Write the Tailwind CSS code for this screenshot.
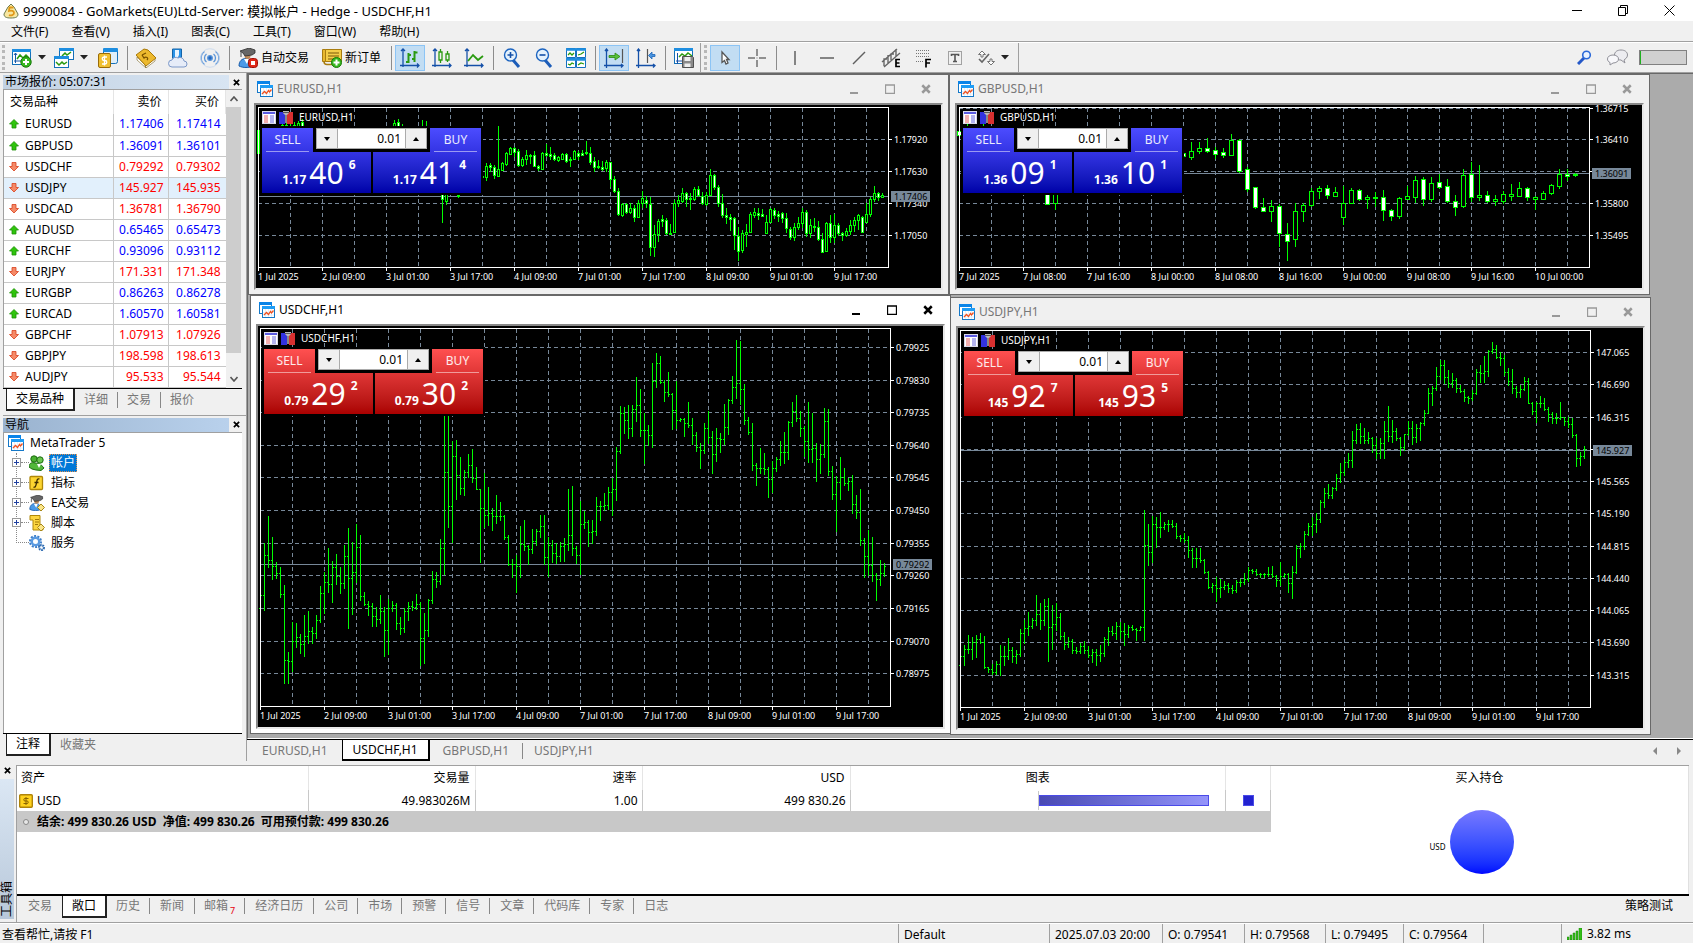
<!DOCTYPE html>
<html lang="zh-CN">
<head>
    <meta charset="UTF-8">
    <meta name="viewport" content="width=device-width, initial-scale=1.0">
    <title>9990084 - GoMarkets(EU)Ltd-Server: 模拟帐户 - Hedge - USDCHF,H1</title>
    <script src="https://cdn.jsdelivr.net/npm/@tailwindcss/browser@4"></script>
</head>
<body class="flex h-screen flex-col overflow-hidden bg-[#f0f0f0] font-['Noto_Sans','Noto_Sans_CJK_SC',sans-serif] text-[12px] leading-4 text-black">

<!-- shared icons -->
<svg class="hidden">
    <symbol id="i-chart" viewBox="0 0 16 16">
        <rect x="0.5" y="0.5" width="12" height="11" fill="#fff" stroke="#1478c8"/>
        <rect x="0" y="0" width="13" height="3" fill="#0a84e8"/>
        <rect x="3.5" y="4.5" width="12" height="11" fill="#fff" stroke="#1478c8"/>
        <rect x="3" y="4" width="13" height="3" fill="#1e9cf5"/>
        <path d="M6.500 7v8M9.500 7v8M12.500 7v8M4 10.500h11M4 13h11" stroke="#d5e6f5" stroke-width=".6"/>
        <path d="M5 13l2.500-2.500 2 2 2-3 1 1.500 2-2.500" fill="none" stroke="#f0501e" stroke-width="1.300"/>
    </symbol>
    <symbol id="i-up" viewBox="0 0 10 10">
        <path d="M5 .5L9.500 5H7v4H3V5H.5z" fill="#2fc40c" stroke="#1d9106" stroke-width=".8"/>
    </symbol>
    <symbol id="i-down" viewBox="0 0 10 10">
        <path d="M5 9L9.500 4.500H7v-4H3v4H.5z" fill="#f58a68" stroke="#d8401c" stroke-width=".8"/>
    </symbol>
    <symbol id="i-caret" viewBox="0 0 8 5"><path d="M0 0h8L4 4.500z" fill="#222"/></symbol>
    <symbol id="i-close" viewBox="0 0 8 8"><path d="M1 1l6 6M7 1L1 7" stroke="currentColor" stroke-width="2"/></symbol>
    <symbol id="i-grid" viewBox="0 0 14 13">
        <rect x=".5" y=".5" width="13" height="12" fill="#fff" stroke="#d8d8e8"/>
        <rect x="1" y="1" width="12" height="2" fill="#5a5ae0"/>
        <path d="M2 5h4M2 7h4M2 9h4M2 11h4" stroke="#e86060"/>
        <path d="M8 5h4M8 7h4M8 9h4M8 11h4" stroke="#6868e0"/>
    </symbol>
    <symbol id="i-trade" viewBox="0 0 14 13">
        <path d="M0 1h6v12H0z" fill="#3232e0"/><path d="M8 1h6v12H8z" fill="#d83030"/>
        <path d="M4 0h6v2l-2 2H6L4 2z" fill="#b8b8b8"/><path d="M6 4h2v8H6z" fill="#888"/><path d="M4 1.500h6" stroke="#555"/>
    </symbol>
    <symbol id="i-hat" viewBox="0 0 20 20">
        <path d="M1 18c0-5 3-7.500 7-7.500s7 2.500 7 7.500c-4 2-10 2-14 0z" fill="#4a9ae8" stroke="#1a5ca8"/>
        <path d="M6 11l3 5 2-5z" fill="#fff"/>
        <circle cx="9.500" cy="8" r="3" fill="#c08a58"/>
        <path d="M2 3l9-3 6 2v3l-3 2-7 1-2-3z" fill="#666" stroke="#2c2c2c" stroke-width=".8"/>
        <path d="M3 4v5" stroke="#444"/>
    </symbol>
</svg>

<!-- title bar -->
<header class="flex h-[21px] shrink-0 items-center bg-white pl-[3px]">
    <svg class="size-4" viewBox="0 0 16 16"><path d="M8 1l3 3 4 7c0 3-2 4-7 4s-7-1-7-4l4-7z" fill="#f8e7a0" stroke="#6b7a50"/><path d="M10.500 4.500h-4l-.5 3.500c3-1 5 0 5 2s-3 3-5 2" fill="none" stroke="#e09818" stroke-width="1.800"/></svg>
    <h1 class="ml-1 flex-1 text-[13px]">9990084 - GoMarkets(EU)Ltd-Server: 模拟帐户 - Hedge - USDCHF,H1</h1>
    <div class="flex gap-[35px] pr-[18px]">
        <button aria-label="最小化"><svg class="size-[11px]" viewBox="0 0 11 11"><path d="M0 5.500h10" stroke="#000"/></svg></button>
        <button aria-label="还原"><svg class="size-[11px]" viewBox="0 0 11 11" fill="none" stroke="#000"><path d="M.5 2.500h7v8h-7zM2.500 2V.5h7v8H8"/></svg></button>
        <button aria-label="关闭"><svg class="size-[11px]" viewBox="0 0 11 11"><path d="M.5.5l10 10M10.500.5l-10 10" stroke="#000"/></svg></button>
    </div>
</header>

<!-- menu -->
<nav class="flex h-[22px] shrink-0 items-center gap-[23px] border-b border-white pl-[11px] shadow-[inset_0_-1px_0_#a0a0a0]">
    <a href="#">文件(F)</a>
    <a href="#">查看(V)</a>
    <a href="#">插入(I)</a>
    <a href="#">图表(C)</a>
    <a href="#">工具(T)</a>
    <a href="#">窗口(W)</a>
    <a href="#">帮助(H)</a>
</nav>

<!-- toolbar -->
<div class="flex h-[30px] shrink-0 items-center border-b border-[#a0a0a0]">
    <div class="ml-[2px] mr-[3px] h-[25px] border-l-3 border-dotted border-[#b8b8b8]"></div>
    <button aria-label="新图表" class="flex w-[42px] items-center gap-1.5 pl-1">
        <svg class="size-5" viewBox="0 0 20 20"><rect x=".5" y="1.500" width="18" height="15" fill="#fff" stroke="#1470b8"/><rect x="0" y="1" width="19" height="3" fill="#1e8ee0"/><path d="M3.500 5v10M2 7l1.500-2L5 7M2 13h14" stroke="#1858a8" fill="none"/><path d="M5 11l3-4 3 3 3-3 3 3" fill="none" stroke="#2a9a10" stroke-width="1.500"/><circle cx="14" cy="14" r="5.200" fill="#38b820" stroke="#167a08"/><path d="M14 11v6M11 14h6" stroke="#fff" stroke-width="2"/></svg>
        <svg class="h-[5px] w-2"><use href="#i-caret"/></svg>
    </button>
    <button aria-label="图表配置" class="flex w-[42px] items-center gap-1.5 pl-1">
        <svg class="size-5" viewBox="0 0 20 20"><rect x="5.500" y=".5" width="14" height="11" fill="#fff" stroke="#1470b8"/><rect x="5" y="0" width="15" height="3" fill="#1e8ee0"/><path d="M8 8l3-3 2 2 4-3" fill="none" stroke="#2a9a10" stroke-width="1.500"/><rect x=".5" y="8.500" width="14" height="11" fill="#fff" stroke="#1470b8"/><rect x="0" y="8" width="15" height="3" fill="#1e8ee0"/><path d="M2 14l3 3 3-3 2 2 3-2" fill="none" stroke="#2a9a10" stroke-width="1.500"/></svg>
        <svg class="h-[5px] w-2"><use href="#i-caret"/></svg>
    </button>
    <button aria-label="市场报价" class="flex w-8 justify-center">
        <svg class="size-5" viewBox="0 0 20 20"><rect x="5.500" y=".5" width="14" height="15" rx="2" fill="#e0effa" stroke="#1470b8"/><rect x="5" y="0" width="15" height="4" rx="1" fill="#1e8ee0"/><rect x=".5" y="5.500" width="12" height="14" rx="1.500" fill="#f0c030" stroke="#9a6c08"/><path d="M9 9H6a1.500 1.500 0 000 3.500h1A1.500 1.500 0 017 16H4M6.500 7.500v10" fill="none" stroke="#fff" stroke-width="1.300"/></svg>
    </button>
    <span class="ml-[3px] mr-[2px] h-6 w-px bg-[#8c8c8c]"></span>
    <button aria-label="账户" class="flex w-8 justify-center">
        <svg class="size-5" viewBox="0 0 20 20"><path d="M1 9l8 8 1 3-9-8zM9 17l10-7v3l-9 7z" fill="#fff" stroke="#8c7a40" stroke-width=".7"/><path d="M0 7L8 1l4 1 8 8-10 8z" fill="#edb92e" stroke="#a87808"/><path d="M6 7l4-2M6 7l2 3c2-2 5 0 3 2" stroke="#7a5200" stroke-width="1.300" fill="none"/></svg>
    </button>
    <button aria-label="云" class="flex w-8 justify-center">
        <svg class="size-5" viewBox="0 0 20 20"><path d="M4.500 10.500V1h9v10" fill="#2b94e8" stroke="#1464a8"/><path d="M7 2h4v5l-2 4-2-1z" fill="#e8f4ff"/><path d="M4 19a3.500 3.500 0 010-7 4 4 0 016-2 4 4 0 016 3 3 3 0 010 6z" fill="#e6ecf8" stroke="#7c98c8"/></svg>
    </button>
    <button aria-label="信号" class="flex w-8 justify-center">
        <svg class="size-5" viewBox="0 0 20 20" fill="none" stroke="#5a94d8" stroke-width="1.300"><circle cx="10" cy="10" r="2.300" fill="#2468c0"/><path d="M6.500 14a5 5 0 010-8M13.500 14a5 5 0 000-8M4.500 16.500a8 8 0 010-13M15.500 16.500a8 8 0 000-13"/><circle cx="10" cy="10" r="9.300" stroke="#c4d6ec" stroke-width=".8"/></svg>
    </button>
    <span class="ml-[3px] mr-[2px] h-6 w-px bg-[#8c8c8c]"></span>
    <button class="flex w-[84px] items-center gap-[3px] pl-1.5">
        <svg class="size-5 shrink-0" viewBox="0 0 20 20"><use href="#i-hat"/><rect x="10.500" y="10.500" width="9" height="9" rx="3" fill="#e02818" stroke="#a01008"/><rect x="13" y="13" width="4" height="4" fill="#fff"/></svg>自动交易
    </button>
    <button class="flex w-[72px] items-center gap-[3px] pl-1.5">
        <svg class="size-5 shrink-0" viewBox="0 0 20 20"><path d="M3.500 1.500h16v12h-16z" fill="#f4cd48" stroke="#a87c10"/><path d="M.5 1.500h3v12h-3z" fill="#e8b830" stroke="#a87c10"/><path d="M2 13.500c0 3 2 3 3 3h6" fill="none" stroke="#a87c10" stroke-width="1.500"/><path d="M6 5h11M6 8h11M6 11h8" stroke="#7a5a08" stroke-width="1.200"/><circle cx="14.500" cy="14.500" r="5" fill="#38b820" stroke="#167a08"/><path d="M14.500 11.500v6M11.500 14.500h6" stroke="#fff" stroke-width="2"/></svg>新订单
    </button>
    <span class="ml-[3px] mr-[2px] h-6 w-px bg-[#8c8c8c]"></span>
    <button aria-label="柱形图" class="mx-px flex h-[26px] w-[30px] items-center justify-center border border-[#8cc4f5] bg-[#c2ddf3]">
        <svg class="size-5" viewBox="0 0 20 20" fill="none"><path d="M3 1v18M0 17.500h19M1 3l2-2 2 2M17 15.500l2 2-2 2" stroke="#1450a8" stroke-width="1.300"/><path d="M8.500 5v10M6 14h2.500M8.500 7H11M14.500 3v11M12 11h2.500M14.500 4.500h3" stroke="#2a9a10" stroke-width="2"/></svg>
    </button>
    <button aria-label="蜡烛图" class="mx-px flex h-[26px] w-[30px] items-center justify-center">
        <svg class="size-5" viewBox="0 0 20 20" fill="none"><path d="M3 1v18M0 17.500h19M1 3l2-2 2 2M17 15.500l2 2-2 2" stroke="#1450a8" stroke-width="1.300"/><path d="M8.500 1v3M8.500 12v3M7 4h3v8H7zM15.500 3v3M15.500 12v2M14 6h3v6h-3z" stroke="#2a9a10" stroke-width="1.300"/></svg>
    </button>
    <button aria-label="折线图" class="mx-px flex h-[26px] w-[30px] items-center justify-center">
        <svg class="size-5" viewBox="0 0 20 20" fill="none"><path d="M3 1v18M0 17.500h19M1 3l2-2 2 2M17 15.500l2 2-2 2" stroke="#1450a8" stroke-width="1.300"/><path d="M4 13l5-6 5 5 5-4" stroke="#2a9a10" stroke-width="1.800"/></svg>
    </button>
    <span class="ml-[3px] mr-[2px] h-6 w-px bg-[#8c8c8c]"></span>
    <button aria-label="放大" class="mx-px flex h-[26px] w-[30px] items-center justify-center">
        <svg class="size-5" viewBox="0 0 20 20" fill="none"><path d="M11 12l6 7" stroke="#1c5cb8" stroke-width="3"/><circle cx="8.500" cy="7" r="6" fill="#e4f1fc" stroke="#1c64c0" stroke-width="1.400"/><path d="M5.500 7h6M8.500 4v6" stroke="#1450a8" stroke-width="1.600"/></svg>
    </button>
    <button aria-label="缩小" class="mx-px flex h-[26px] w-[30px] items-center justify-center">
        <svg class="size-5" viewBox="0 0 20 20" fill="none"><path d="M11 12l6 7" stroke="#1c5cb8" stroke-width="3"/><circle cx="8.500" cy="7" r="6" fill="#e4f1fc" stroke="#1c64c0" stroke-width="1.400"/><path d="M5.500 7h6" stroke="#1450a8" stroke-width="1.600"/></svg>
    </button>
    <button aria-label="平铺窗口" class="mx-px flex h-[26px] w-[30px] items-center justify-center">
        <svg class="size-5" viewBox="0 0 20 20" fill="none"><path d="M.5.5h9v9h-9zM10.500.5h9v9h-9zM.5 10.500h9v9h-9zM10.500 10.500h9v9h-9z" fill="#fff" stroke="#1470c0"/><path d="M0 1.500h20M0 11.500h20" stroke="#1e8ee0" stroke-width="2.500"/><path d="M2 7l2-2 2 2 2-2M12 7l3-1 3-2M2 16l2 1 2-2 2 1M12 17l3-2 3 1" stroke="#2a9a10" stroke-width="1.300"/></svg>
    </button>
    <span class="ml-[3px] mr-[2px] h-6 w-px bg-[#8c8c8c]"></span>
    <button aria-label="自动滚动" class="mx-px flex h-[26px] w-[30px] items-center justify-center border border-[#8cc4f5] bg-[#c2ddf3]">
        <svg class="size-5" viewBox="0 0 20 20" fill="none"><path d="M2.500 1v19M0 17.500h18M1 3l1.500-2L4 3M17 16l2 1.500-2 2" stroke="#1450a8" stroke-width="1.300"/><path d="M18.500 1v14" stroke="#555" stroke-width="1.200"/><path d="M5 7.500h6V5l5 3.500-5 3.500V9.500H5z" fill="#58c03a" stroke="#2a8a10" stroke-width=".8"/></svg>
    </button>
    <button aria-label="图表平移" class="mx-px flex h-[26px] w-[30px] items-center justify-center">
        <svg class="size-5" viewBox="0 0 20 20" fill="none"><path d="M2.500 1v19M0 17.500h18M1 3l1.500-2L4 3M17 16l2 1.500-2 2" stroke="#1450a8" stroke-width="1.300"/><path d="M11.500 1v14" stroke="#555" stroke-width="1.200"/><path d="M19 6.500h-3V4l-3.500 3.500L16 11V8.500h3z" fill="#4a94e0" stroke="#1c64b8" stroke-width=".8"/></svg>
    </button>
    <span class="ml-[3px] mr-[2px] h-6 w-px bg-[#8c8c8c]"></span>
    <button aria-label="保存模板" class="mx-px flex h-[26px] w-[30px] items-center justify-center">
        <svg class="size-5" viewBox="0 0 20 20" fill="none"><rect x=".5" y=".5" width="18" height="15" fill="#fff" stroke="#1470b8"/><path d="M0 1.500h19" stroke="#1e8ee0" stroke-width="3"/><path d="M3.500 5v11M2 13h6" stroke="#1450a8"/><path d="M5 9l3-3 3 2 3-3 4 3" stroke="#2a9a10" stroke-width="1.500"/><path d="M8.500 8.500h10l1 1v10h-11z" fill="#8a8a8a" stroke="#505050"/><path d="M10.500 9v4h6V9zM10.500 19v-3.500h6V19" fill="#eee"/></svg>
    </button>
    <span class="h-full w-px bg-[#a0a0a0]"></span>
    <div class="ml-[3px] mr-[2px] h-[25px] border-l-3 border-dotted border-[#b8b8b8]"></div>
    <button aria-label="光标" class="mx-px flex h-[26px] w-[30px] items-center justify-center border border-[#8cc4f5] bg-[#c2ddf3]">
        <svg class="size-4" viewBox="0 0 16 16"><path d="M5 2v10.500l2.500-2L9 14l2-1-1.500-3.500H12z" fill="#fff" stroke="#555" stroke-width="1.300"/></svg>
    </button>
    <button aria-label="十字准线" class="mx-px flex h-[26px] w-[30px] items-center justify-center">
        <svg class="size-5" viewBox="0 0 20 20"><path d="M10 1v7M10 12v7M1 10h7M12 10h7" stroke="#707070" stroke-width="1.500"/><path d="M9.500 10h1" stroke="#707070"/></svg>
    </button>
    <span class="ml-[3px] mr-[2px] h-6 w-px bg-[#8c8c8c]"></span>
    <button aria-label="垂直线" class="mx-px flex h-[26px] w-[30px] items-center justify-center"><svg class="size-5" viewBox="0 0 20 20"><path d="M10 3v14" stroke="#606060" stroke-width="1.500"/></svg></button>
    <button aria-label="水平线" class="mx-px flex h-[26px] w-[30px] items-center justify-center"><svg class="size-5" viewBox="0 0 20 20"><path d="M3 10h14" stroke="#606060" stroke-width="1.500"/></svg></button>
    <button aria-label="趋势线" class="mx-px flex h-[26px] w-[30px] items-center justify-center"><svg class="size-5" viewBox="0 0 20 20"><path d="M4 16L16 4" stroke="#606060" stroke-width="1.500"/></svg></button>
    <button aria-label="等距通道" class="mx-px flex h-[26px] w-[30px] items-center justify-center">
        <svg class="size-5" viewBox="0 0 20 20"><path d="M1 14L16 1M3 19L19 5M3 18v-7h3M7 15V7M10 12V6h3M15 9V1" stroke="#666" fill="none" stroke-width="1.400"/><path d="M19 11.500h-4v7h4M15 15h3.500" stroke="#000" fill="none" stroke-width="1.700"/></svg>
    </button>
    <button aria-label="斐波那契" class="mx-px flex h-[26px] w-[30px] items-center justify-center">
        <svg class="size-5" viewBox="0 0 20 20"><path d="M3 2.500h14M3 5.500h14M3 8.500h14M3 13.500h8" stroke="#777" stroke-dasharray="1 1"/><path d="M18 11.500h-5v8M13 15h4" stroke="#000" fill="none" stroke-width="1.700"/></svg>
    </button>
    <button aria-label="文本" class="mx-px flex h-[26px] w-[30px] items-center justify-center">
        <svg class="size-5" viewBox="0 0 20 20"><rect x="3.500" y="3.500" width="13" height="13" fill="none" stroke="#555" stroke-dasharray="1 1"/><path d="M6.500 8V6.500h7V8M10 6.500v7M8 13.500h4" stroke="#555" stroke-width="1.600" fill="none"/></svg>
    </button>
    <button aria-label="图形" class="ml-px flex h-[26px] w-[42px] items-center gap-[5px] pl-1">
        <svg class="size-5" viewBox="0 0 20 20"><path d="M6 3L2.500 6.500H5V9h2V6.500h2.500zM15 17l3.500-3.500H16V11h-2v2.500h-2.500z" fill="#fff" stroke="#666" stroke-width=".9"/><path d="M3 11l3 3 7-8" fill="none" stroke="#666" stroke-width="1.600"/></svg>
        <svg class="h-[5px] w-2 shrink-0"><use href="#i-caret"/></svg>
    </button>
    <span class="ml-1 h-full w-px bg-[#a0a0a0]"></span>
    <div class="ml-auto flex items-center pr-[6px]">
        <button aria-label="搜索"><svg class="size-[15px]" viewBox="0 0 15 15"><path d="M7 8l-6 6" stroke="#2458c8" stroke-width="3"/><circle cx="9.500" cy="5" r="3.800" fill="#e8f2ff" stroke="#2a68d8" stroke-width="1.600"/></svg></button>
        <button aria-label="聊天" class="ml-[15px]"><svg class="h-[17px] w-[21px]" viewBox="0 0 21 17"><path d="M14 1c4 0 6.500 2 6.500 5S18 10 17 11l1 3-4-3c-4 0-6.500-2-6.500-5S10 1 14 1z" fill="#ececf0" stroke="#909098"/><path d="M6 6c3 0 5.500 1.500 5.500 4S9 14 6 14l-3 2v-2.500C1.500 13 .5 11.500.5 10 .5 7.500 3 6 6 6z" fill="#f8f8fb" stroke="#909098"/></svg></button>
        <div class="ml-[11px] h-[15px] w-12 border border-[#808080] bg-[#d0d0d0]"><div class="h-full w-px bg-[#20b020]"></div></div>
    </div>
</div>

<main class="flex min-h-0 flex-1">
    <!-- left docks -->
    <aside class="flex w-[247px] shrink-0 flex-col border-r border-[#a0a0a0] pl-[3px] pt-[2px]">
        <section class="flex flex-col pr-1">
            <div class="flex h-[14px] items-center justify-between">
                <h2 class="flex h-full w-[226px] items-center bg-linear-to-r from-[#c2d2e3] to-[#d8e5f3] pl-[2px]">市场报价: 05:07:31</h2>
                <button aria-label="关闭市场报价" class="mr-0.5"><svg class="size-[7px]"><use href="#i-close"/></svg></button>
            </div>
            <div class="flex border-l border-t border-[#a0a0a0] bg-white">
                <table class="w-[222px] table-fixed border-collapse">
                    <thead>
                        <tr class="h-6">
                            <th class="w-[109px] border-r border-[#e5e5e5] pl-1.5 text-left font-normal">交易品种</th>
                            <th class="w-[55px] border-r border-[#e5e5e5] pr-1.5 text-right font-normal">卖价</th>
                            <th class="border-r border-[#e5e5e5] pr-1.5 text-right font-normal">买价</th>
                        </tr>
                    </thead>
                    <tbody id="quotes"></tbody>
                </table>
                <div class="flex w-4 flex-col items-center bg-[#f0f0f0]">
                    <button aria-label="向上" class="flex h-[17px] items-center"><svg class="h-[6px] w-2" viewBox="0 0 8 6"><path d="M.5 5L4 1l3.500 4" fill="none" stroke="#555" stroke-width="1.600"/></svg></button>
                    <div class="w-full flex-1 pb-[18px]"><div class="h-full w-[15px] bg-[#cdcdcd]"></div></div>
                    <button aria-label="向下" class="flex h-[17px] items-center"><svg class="h-[6px] w-2" viewBox="0 0 8 6"><path d="M.5 1L4 5l3.500-4" fill="none" stroke="#555" stroke-width="1.600"/></svg></button>
                </div>
            </div>
            <div class="flex h-[23px] items-start border-t border-black pl-[3px] text-[#777]">
                <button class="h-[22px] border-x border-b border-r-2 border-b-2 border-[#222] bg-white px-[9px] text-black">交易品种</button>
                <button class="mt-[3px] border-r border-[#888] px-[9px]">详细</button>
                <button class="mt-[3px] border-r border-[#888] px-[9px]">交易</button>
                <button class="mt-[3px] px-[9px]">报价</button>
            </div>
        </section>
        <section class="mt-1 flex min-h-0 flex-1 flex-col border-t border-[#a0a0a0] pb-[5px] pr-1 pt-[2px]">
            <div class="flex h-[14px] items-center justify-between">
                <h2 class="flex h-full w-[226px] items-center bg-linear-to-r from-[#9ab3cf] to-[#b9d1ec] pl-[2px]">导航</h2>
                <button aria-label="关闭导航" class="mr-0.5"><svg class="size-[7px]"><use href="#i-close"/></svg></button>
            </div>
            <div class="flex-1 border-l border-t border-[#a0a0a0] bg-white pl-1">
                <div class="flex h-5 items-center gap-1.5"><svg class="size-4"><use href="#i-chart"/></svg>MetaTrader 5</div>
                <ul class="relative">
                    <li class="absolute bottom-[10px] left-2 top-0 border-l border-dotted border-[#888]"></li>
                    <li class="relative flex h-5 items-center pl-1">
                        <button aria-label="展开" class="flex size-[9px] items-center justify-center border border-[#999] bg-white"><svg class="size-[5px]" viewBox="0 0 5 5"><path d="M0 2.500h5M2.500 0v5" stroke="#2040a0"/></svg></button><span class="w-2 border-t border-dotted border-[#888]"></span>
                        <svg class="size-4" viewBox="0 0 16 16"><circle cx="5" cy="4" r="3.200" fill="#48b030" stroke="#1c6c10"/><circle cx="11" cy="5" r="3.200" fill="#6cc850" stroke="#1c6c10"/><path d="M0 12c0-4 3-5 6-4 3 0 6 1 9 5l-3 2.500-5-.5-4-1z" fill="#52b83a" stroke="#1c6c10"/><path d="M8 9l2 4 2-4" fill="#fff"/></svg>
                        <span class="ml-1 border border-dotted border-[#e09050] bg-[#0078d7] px-px text-white">帐户</span>
                    </li>
                    <li class="relative flex h-5 items-center pl-1">
                        <button aria-label="展开" class="flex size-[9px] items-center justify-center border border-[#999] bg-white"><svg class="size-[5px]" viewBox="0 0 5 5"><path d="M0 2.500h5M2.500 0v5" stroke="#2040a0"/></svg></button><span class="w-2 border-t border-dotted border-[#888]"></span>
                        <svg class="size-4" viewBox="0 0 16 16"><rect x="1" y="1.500" width="12.500" height="13" rx="1" fill="#fcd530" stroke="#b08808" stroke-width="1.300"/><path d="M10.500 4C8 3 8 6 7.500 8s-1 5-3 4M5.500 7.500h4" fill="none" stroke="#3c2c00" stroke-width="1.300"/></svg>
                        <span class="ml-1.5">指标</span>
                    </li>
                    <li class="relative flex h-5 items-center pl-1">
                        <button aria-label="展开" class="flex size-[9px] items-center justify-center border border-[#999] bg-white"><svg class="size-[5px]" viewBox="0 0 5 5"><path d="M0 2.500h5M2.500 0v5" stroke="#2040a0"/></svg></button><span class="w-2 border-t border-dotted border-[#888]"></span>
                        <svg class="size-4" viewBox="0 0 16 16"><use href="#i-hat"/><path d="M12 9l3.500 3.500L12 16l-3.500-3.500z" fill="#fbe68a" stroke="#a88818"/></svg>
                        <span class="ml-1.5">EA交易</span>
                    </li>
                    <li class="relative flex h-5 items-center pl-1">
                        <button aria-label="展开" class="flex size-[9px] items-center justify-center border border-[#999] bg-white"><svg class="size-[5px]" viewBox="0 0 5 5"><path d="M0 2.500h5M2.500 0v5" stroke="#2040a0"/></svg></button><span class="w-2 border-t border-dotted border-[#888]"></span>
                        <svg class="size-4" viewBox="0 0 16 16"><path d="M1 .5h10v12h3v2.500H4v-10H1z" fill="#fcd540" stroke="#b08808"/><path d="M6 4.500h4M6 7h4M6 9.500h3" stroke="#a07808"/><path d="M12 9l3.500 3.500L12 16l-3.500-3.500z" fill="#fbe68a" stroke="#a88818"/></svg>
                        <span class="ml-1.5">脚本</span>
                    </li>
                    <li class="relative flex h-5 items-center pl-2">
                        <span class="w-[13px] border-t border-dotted border-[#888]"></span>
                        <svg class="size-4" viewBox="0 0 16 16" fill="none"><circle cx="6.500" cy="6.500" r="5.500" stroke="#3a7cc8" stroke-width="2" stroke-dasharray="2 1.400"/><circle cx="6.500" cy="6.500" r="3.700" stroke="#5a9ae0" stroke-width="2.400"/><circle cx="12.500" cy="12.500" r="2.400" stroke="#2a68b0" stroke-width="2.200" stroke-dasharray="1.500 .7"/></svg>
                        <span class="ml-1.5">服务</span>
                    </li>
                </ul>
            </div>
            <div class="flex h-[23px] items-start border-t border-black pl-[3px] text-[#777]">
                <button class="h-[22px] border-x border-b border-r-2 border-b-2 border-[#222] bg-white px-[9px] text-black">注释</button>
                <button class="mt-[3px] px-[9px]">收藏夹</button>
            </div>
        </section>
    </aside>

    <!-- chart workspace -->
    <div class="flex min-w-0 flex-1 flex-col">
        <div id="desk" class="relative min-h-0 flex-1 overflow-hidden border-b border-l border-t border-[#696969] border-b-white bg-[#ababab]"></div>
        <div class="flex h-[22px] shrink-0 items-start border-t border-black pl-[5px] text-[#777]">
            <button class="mt-[3px] px-[10px]">EURUSD,H1</button>
            <button class="ml-1 h-[21px] border-x border-b border-r-2 border-b-2 border-black bg-white px-[10px] text-black">USDCHF,H1</button>
            <button class="mt-[3px] border-r border-[#888] px-[13px]">GBPUSD,H1</button>
            <button class="mt-[3px] px-[11px]">USDJPY,H1</button>
            <div class="ml-auto flex gap-[18px] self-center pr-3">
                <button aria-label="向左滚动"><svg class="h-2 w-[5px]" viewBox="0 0 5 8"><path d="M4 0v8L0 4z" fill="#888"/></svg></button>
                <button aria-label="向右滚动"><svg class="h-2 w-[5px]" viewBox="0 0 5 8"><path d="M1 0v8l4-4z" fill="#888"/></svg></button>
            </div>
        </div>
    </div>
</main>

<!-- toolbox -->
<section class="flex h-[162px] shrink-0 border-b border-[#a0a0a0] pr-1">
    <div class="flex w-4 shrink-0 flex-col items-center pb-[3px] pr-0.5 pt-1.5">
        <button aria-label="关闭工具箱" class="mb-1 flex h-2"><svg class="size-[7px]"><use href="#i-close"/></svg></button>
        <h2 class="flex w-[14px] flex-1 rotate-180 items-center justify-start bg-linear-to-t from-[#dbe7f4] to-[#b8c8da] pt-[2px] leading-[14px] [text-orientation:sideways] [writing-mode:vertical-rl]">工具箱</h2>
    </div>
    <div class="mt-1 flex min-w-0 flex-1 flex-col border-l border-t border-[#a0a0a0]">
        <div class="flex min-h-0 flex-1 bg-white">
            <div class="w-3/4">
                <table class="w-full table-fixed border-collapse">
                    <thead>
                        <tr class="h-6">
                            <th class="w-[291px] border-r border-[#e5e5e5] pl-1 text-left font-normal">资产</th>
                            <th class="w-[167px] border-r border-[#e5e5e5] pr-[5px] text-right font-normal">交易量</th>
                            <th class="w-[167px] border-r border-[#e5e5e5] pr-[5px] text-right font-normal">速率</th>
                            <th class="w-[208px] border-r border-[#e5e5e5] pr-[5px] text-right font-normal">USD</th>
                            <th class="border-r border-[#e5e5e5] font-normal">图表</th>
                            <th class="w-[45px] border-r border-[#e5e5e5]" aria-label="颜色"></th>
                        </tr>
                    </thead>
                    <tbody>
                        <tr class="h-[21px]">
                            <td class="border-r border-[#c8c8c8] pl-[2px]"><span class="flex items-center gap-1"><svg class="size-[14px]" viewBox="0 0 14 14"><rect x=".7" y=".7" width="12.600" height="12.600" rx="1" fill="#ffd21e" stroke="#b08408" stroke-width="1.400"/><path d="M9.500 4.500H6a1.200 1.200 0 000 2.500h2a1.200 1.200 0 010 2.500H4.500M7 3v8" fill="none" stroke="#8a6400"/></svg>USD</span></td>
                            <td class="border-r border-[#c8c8c8] pr-1 text-right">49.983026M</td>
                            <td class="border-r border-[#c8c8c8] pr-1 text-right">1.00</td>
                            <td class="border-r border-[#c8c8c8] pr-1 text-right">499 830.26</td>
                            <td class="border-r border-[#c8c8c8]"><div class="ml-[50%] border-l border-[#c8c8c8] py-1"><div class="h-[11px] w-[170px] border border-[#4a4ae8] bg-linear-to-r from-[#4a4ab4] to-[#9494fa]"></div></div></td>
                            <td class="border-r border-[#c8c8c8]"><div class="mx-auto size-[11px] border border-[#4a4ae8] bg-[#2222d0]"></div></td>
                        </tr>
                    </tbody>
                </table>
                <p class="flex h-[21px] items-center gap-2 bg-[#c8c8c8] pl-1.5 font-bold"><i class="size-[6px] rounded-full border border-[#888] bg-[#e8e8e8]"></i><span class="whitespace-pre">结余: 499 830.26 USD  净值: 499 830.26  可用预付款: 499 830.26</span></p>
            </div>
            <figure class="flex flex-1 flex-col items-center border-r border-[#e0e0e0]">
                <figcaption class="flex h-6 items-center">买入持仓</figcaption>
                <div class="mr-4 mt-5 flex items-center gap-1 text-[8px]"><span class="mt-[9px]">USD</span><div class="size-16 rounded-full bg-linear-to-b from-[#7878ff] to-[#0000ff]"></div></div>
            </figure>
        </div>
        <div class="flex h-7 shrink-0 items-start border-t-2 border-black pl-[1px] text-[#777]">
            <button class="mt-[2px] px-[10px]">交易</button>
            <button class="h-[22px] border-x border-b border-r-2 border-b-2 border-[#222] bg-white px-[9px] text-black">敞口</button>
            <button class="mt-[2px] border-r border-[#888] px-[9px]">历史</button>
            <button class="mt-[2px] border-r border-[#888] px-[10px]">新闻</button>
            <button class="mt-[2px] flex h-4 border-r border-[#888] px-[9px]">邮箱<span class="mt-[5px] pl-0.5 text-[9px] leading-4 text-red-600">7</span></button>
            <button class="mt-[2px] border-r border-[#888] px-[10px]">经济日历</button>
            <button class="mt-[2px] border-r border-[#888] pl-[10px] pr-[9px]">公司</button>
            <button class="mt-[2px] border-r border-[#888] pl-[10px] pr-[9px]">市场</button>
            <button class="mt-[2px] border-r border-[#888] pl-[10px] pr-[9px]">预警</button>
            <button class="mt-[2px] border-r border-[#888] pl-[10px] pr-[9px]">信号</button>
            <button class="mt-[2px] border-r border-[#888] pl-[10px] pr-[9px]">文章</button>
            <button class="mt-[2px] border-r border-[#888] pl-[10px] pr-[9px]">代码库</button>
            <button class="mt-[2px] border-r border-[#888] pl-[10px] pr-[9px]">专家</button>
            <button class="mt-[2px] px-[10px]">日志</button>
            <button class="ml-auto mr-4 mt-[2px] text-black">策略测试</button>
        </div>
    </div>
</section>

<!-- status bar -->
<footer class="flex h-5 shrink-0 items-stretch border-t border-white leading-[22px]">
    <div class="flex-1 pl-[2px]">查看帮忙,请按 F1</div>
    <div class="w-[151px] border-l border-[#a0a0a0] pl-[5px]">Default</div>
    <div class="w-[113px] border-l border-[#a0a0a0] pl-[5px]">2025.07.03 20:00</div>
    <div class="w-[82px] border-l border-[#a0a0a0] pl-[5px]">O: 0.79541</div>
    <div class="w-[81px] border-l border-[#a0a0a0] pl-[5px]">H: 0.79568</div>
    <div class="w-[78px] border-l border-[#a0a0a0] pl-[5px]">L: 0.79495</div>
    <div class="w-[80px] border-l border-[#a0a0a0] pl-[5px]">C: 0.79564</div>
    <div class="w-[78px] border-l border-[#a0a0a0]"></div>
    <div class="flex w-[132px] items-center gap-[5px] border-l border-[#a0a0a0] pl-[5px]">
        <svg class="h-3 w-[15px]" viewBox="0 0 15 12"><path d="M0 9h2v3H0zM3 7h2v5H3zM6 5h2v7H6zM9 3h2v9H9zM12 0h3v12h-3z" fill="#34c018" stroke="#188008" stroke-width=".5"/></svg>3.82 ms
    </div>
</footer>

<script>
// market watch rows: symbol, bid, ask, direction
const quotes = [
    ['EURUSD','1.17406','1.17414',1],['GBPUSD','1.36091','1.36101',1],['USDCHF','0.79292','0.79302',0],
    ['USDJPY','145.927','145.935',0],['USDCAD','1.36781','1.36790',0],['AUDUSD','0.65465','0.65473',1],
    ['EURCHF','0.93096','0.93112',1],['EURJPY','171.331','171.348',0],['EURGBP','0.86263','0.86278',1],
    ['EURCAD','1.60570','1.60581',1],['GBPCHF','1.07913','1.07926',0],['GBPJPY','198.598','198.613',0],
    ['AUDJPY','95.533','95.544',0]
];
document.getElementById('quotes').innerHTML = quotes.map(([s, bid, ask, up]) => `
    <tr class="h-[21px] ${s === 'USDJPY' ? 'bg-[#e2f0fc]' : 'bg-white'} ${up ? 'text-[#0000ff]' : 'text-[#ff0000]'}">
        <td class="border-b border-r border-[#c8c8c8] pl-[5px] text-black"><span class="flex items-center gap-[6px]"><svg class="size-[10px]"><use href="${up ? '#i-up' : '#i-down'}"/></svg>${s}</span></td>
        <td class="border-b border-r border-[#c8c8c8] pr-1 text-right">${bid}</td>
        <td class="border-b border-[#c8c8c8] pr-[5px] text-right">${ask}</td>
    </tr>`).join('');

// bars are "high low", candles are "index high top bottom low u|d", in thirds of a pixel
const chfBars = `900 955,758 960,678 832,740 866,815 865,832 920,886 1178,1086 1178,996 1142,1000 1070,1032 1090,975 1097,963 1058,1012 1058,975 1045,887 995,846 970,775 905,812 935,792 882,832 908,765 893,714 1014,756 972,702 875,735 930,905 945,932 975,940 1008,950 1008,915 1000,950 1098,927 1092,934 962,940 1018,980 1032,955 1025,935 990,932 960,912 958,935 1126,970 1120,927 1038,843 938,845 890,747 882,378 852,378 712,453 755,450 628,500 612,540 616,492 560,477 575,530 598,597 815,550 710,590 705,655 720,615 700,636 690,675 748,735 825,808 862,795 907,708 860,690 780,765 822,717 790,718 765,675 740,675 822,742 858,750 815,760 820,755 812,745 812,597 780,588 795,768 820,633 852,662 715,690 768,690 760,621 735,633 690,610 660,590 658,563 675,470 630,348 488,350 430,345 445,345 437,262 392,297 438,368 518,405 465,220 470,190 292,197 280,270 333,246 318,308 418,272 413,385 392,385 438,336 410,385 462,425 482,460 535,400 488,363 460,423 550,415 513,430 485,342 462,328 432,258 340,150 323,152 343,282 402,380 433,400 540,520 585,475 548,490 553,530 620,513 605,500 542,453 525,426 520,392 507,335 408,316 392,363 438,407 497,336 517,368 515,460 572,462 550,355 502,357 555,528 628,558 722,502 628,535 585,563 600,555 670,615 683,597 766,743 862,720 855,740 872,850 930,810 885,818 858`;
const jpyBars = `1090 1124,1065 1124,1035 1090,1042 1108,1035 1102,1030 1060,1038 1135,1130 1145,1122 1152,1112 1152,1066 1155,1068 1125,1045 1106,1070 1115,1080 1118,1018 1097,990 1060,966 1035,985 1015,916 1005,940 1018,927 1005,924 1112,945 1078,938 1020,968 1048,1026 1076,1042 1070,1046 1090,1072 1088,1060 1090,1052 1090,1068 1100,1076 1115,1078 1124,1066 1112,1042 1098,1010 1065,1008 1035,996 1048,996 1045,1000 1065,1005 1042,1006 1020,1015 1050,1008 1020,660 1050,702 825,678 815,680 770,667 740,696 716,690 722,690 712,700 745,735 752,728 755,738 800,775 830,775 830,775 815,808 848,843 895,878 905,862 933,868 920,872 898,880 905,885 908,870 905,868 888,848 882,832 872,838 850,838 855,848 860,848 862,832 858,828 862,855 888,815 885,850 860,850 905,828 923,765 850,758 800,722 778,700 735,680 735,668 725,630 695,595 650,583 625,590 625,553 600,520 575,510 555,488 530,424 530,402 460,400 460,415 460,425 460,440 485,445 505,445 505,393 505,348 452,390 455,415 450,440 495,432 480,393 435,392 462,402 455,395 450,360 405,295 370,287 345,232 300,210 268,210 280,240 292,250 290,265 305,285 305,297 333,318 340,300 330,237 312,225 275,198 275,180 258,156 190,165 205,187 225,195 255,235 285,237 310,287 322,285 322,262 300,265 340,335 372,335 395,317 350,325 360,350 392,365 398,368 398,336 388,380 405,382 410,383 440,432 527,485 525,467 503`;
const eurCandles = `0 175 180 250 250 u,6 155 165 200 200 u,7 158 166 200 200 d,8 162 168 200 200 u,9 155 164 200 200 u,10 152 158 200 200 u,11 147 155 200 200 d,34 150 160 200 200 u,35 147 156 200 200 d,36 162 168 200 200 d,41 150 190 200 200 u,42 152 190 200 200 u,46 370 370 388 460 d,47 370 370 392 405 u,50 370 374 378 384 u,56 315 318 322 330 u,57 278 288 320 332 u,58 280 286 292 305 d,59 285 290 316 328 d,60 168 298 318 318 u,61 275 280 300 302 u,62 245 250 282 288 u,63 231 235 252 255 u,64 232 234 246 262 d,65 238 242 284 290 d,66 260 268 286 292 u,67 240 256 268 285 u,68 252 255 258 282 d,69 244 256 288 290 d,70 285 287 294 303 d,71 245 250 296 297 u,72 222 250 255 262 d,73 232 252 258 270 d,74 250 256 268 272 d,75 258 262 270 275 u,76 248 252 266 270 u,77 250 252 272 278 d,78 262 266 270 290 u,79 240 244 266 270 u,80 242 250 258 270 d,81 240 248 254 258 d,82 213 246 250 255 d,83 232 248 275 285 d,84 262 274 290 305 d,85 270 288 292 296 d,86 273 290 296 302 d,87 270 276 295 305 u,88 275 276 328 352 d,89 318 328 362 368 d,90 355 364 432 438 d,91 400 402 435 440 u,92 398 402 426 432 d,93 400 415 425 432 u,94 405 415 440 455 d,95 390 398 440 442 u,96 363 385 400 415 u,97 378 390 398 415 d,98 380 402 532 557 d,99 465 492 532 560 u,100 448 452 492 515 u,101 435 448 454 470 d,102 445 450 490 495 d,103 462 488 492 495 u,104 390 398 486 488 u,105 375 390 398 412 u,106 353 370 392 398 u,107 366 370 388 410 d,108 368 384 388 420 u,109 350 358 386 392 u,110 348 358 376 380 d,111 365 378 400 405 d,112 365 376 402 408 u,113 297 315 376 378 u,114 312 315 350 360 d,115 345 352 400 410 d,116 372 400 436 445 d,117 415 434 442 462 d,118 432 442 446 482 d,119 440 444 496 540 d,120 470 497 542 572 d,121 480 490 540 548 u,122 462 486 492 530 u,123 425 432 486 490 u,124 415 426 434 445 u,125 415 428 436 450 d,126 418 432 438 440 d,127 435 456 490 492 u,128 415 418 456 458 u,129 415 420 435 448 d,130 422 432 438 455 d,131 425 430 444 458 d,132 430 444 475 488 d,133 472 476 502 510 d,134 460 470 502 512 u,135 440 458 472 480 u,136 415 426 460 475 u,137 420 426 488 500 d,138 448 466 490 505 u,139 445 468 472 485 d,140 452 470 508 512 d,141 490 508 545 548 d,142 455 460 542 545 u,143 435 460 500 520 d,144 432 464 500 520 u,145 460 466 490 498 d,146 485 490 496 512 d,147 475 482 494 502 u,148 450 464 484 496 u,149 440 450 464 485 u,150 432 436 450 480 u,151 438 440 486 488 d,152 400 432 456 460 u,153 380 386 432 440 u,154 348 368 388 395 u,155 365 370 380 392 d,156 368 376 380 384 u`;
const gbpCandles = `0 180 184 195 198 d,1 162 180 195 198 u,2 168 180 190 190 u,3 160 180 190 190 u,11 340 345 402 405 d,12 345 345 400 420 u,28 246 248 258 262 d,29 216 242 260 270 u,30 216 234 242 252 u,31 204 235 242 250 d,32 232 241 252 266 d,33 235 247 254 263 d,34 192 210 254 256 u,35 208 210 302 310 d,36 292 298 356 366 d,37 350 352 412 416 d,38 385 412 422 426 d,39 390 408 424 455 u,40 402 408 488 530 d,41 460 493 513 573 d,42 400 424 508 530 u,43 398 406 424 455 u,44 355 364 404 410 u,45 348 354 364 388 u,46 345 354 376 388 d,47 352 367 378 382 u,48 348 398 442 465 u,49 353 361 398 402 u,50 358 361 388 392 d,51 376 382 386 416 u,52 366 380 384 412 u,53 360 382 420 452 d,54 418 421 438 454 d,55 382 384 437 448 u,56 348 378 386 390 u,57 318 331 380 400 u,58 320 328 387 408 d,59 320 338 386 396 u,60 312 336 350 356 d,61 328 349 392 400 d,62 375 393 410 438 d,63 298 314 409 413 u,64 276 312 382 395 d,65 285 376 382 392 u,66 362 376 392 400 d,67 375 388 392 408 u,68 363 373 392 402 u,69 342 373 378 392 u,70 337 355 377 380 u,71 350 355 380 392 d,72 379 382 388 420 u,73 364 370 386 388 u,74 342 346 368 376 u,75 298 311 347 356 u,76 298 311 318 332 d,77 308 311 316 322 u`;

const days = ['1 Jul 2025','2 Jul 09:00','3 Jul 01:00','3 Jul 17:00','4 Jul 09:00','7 Jul 01:00','7 Jul 17:00','8 Jul 09:00','9 Jul 01:00','9 Jul 17:00'];
const charts = [
    { name:'EURUSD,H1', x:0, y:0, h:183, base:35, step:4, candles:eurCandles, times:days,
      grid:[[34,'1.17920'],[66,'1.17630'],[98,'1.17340'],[130,'1.17050']], now:[91,'1.17406'],
      sell:['1.17','40','6'], buy:['1.17','41','4'] },
    { name:'GBPUSD,H1', x:701, y:0, h:183, base:35, step:8, candles:gbpCandles,
      times:['7 Jul 2025','7 Jul 08:00','7 Jul 16:00','8 Jul 00:00','8 Jul 08:00','8 Jul 16:00','9 Jul 00:00','9 Jul 08:00','9 Jul 16:00','10 Jul 00:00'],
      grid:[[3,'1.36715'],[34,'1.36410'],[66,''],[98,'1.35800'],[130,'1.35495']], now:[68,'1.36091'],
      sell:['1.36','09','1'], buy:['1.36','10','1'] },
    { name:'USDCHF,H1', x:2, y:221, h:401, base:36, step:4, bars:chfBars, times:days, active:true, red:true,
      grid:[[21,'0.79925'],[54,'0.79830'],[86,'0.79735'],[119,'0.79640'],[151,'0.79545'],[184,'0.79450'],[217,'0.79355'],[249,'0.79260'],[282,'0.79165'],[315,'0.79070'],[347,'0.78975']],
      now:[238,'0.79292'], sell:['0.79','29','2'], buy:['0.79','30','2'] },
    { name:'USDJPY,H1', x:702, y:223, h:400, base:38, step:4, bars:jpyBars, times:days, red:true,
      grid:[[24,'147.065'],[56,'146.690'],[89,'146.315'],[121,''],[153,'145.565'],[185,'145.190'],[218,'144.815'],[250,'144.440'],[282,'144.065'],[314,'143.690'],[347,'143.315']],
      now:[122,'145.927'], sell:['145','92','7'], buy:['145','93','5'] }
];

function plot(c) {
    const L = 2, R = 632, T = 2, B = c.h - 21;
    const px = v => Math.round(v / 3) - c.base;
    let s = '', d = '';
    for (let x = L + 32; x < R; x += 32) d += `M${x}.5 ${T + 1}V${B}`;
    for (const [y] of c.grid) d += `M${L} ${y}.5H${R}`;
    s += `<path d="${d}" stroke="#778899" stroke-dasharray="4 3" fill="none"/>`;
    s += `<path d="M${L} ${c.now[0]}.5H${R}" stroke="#778899"/>`;
    if (c.bars) {
        const list = c.bars.split(',').map(b => b.split(' ').map(Number));
        let p = '', prev = list[0][1];
        list.forEach(([hi, lo], i) => {
            const next = list[i + 1] || [hi, lo];
            // close sits in the overlap with the following bar
            const a = Math.max(hi, next[0]), b = Math.min(lo, next[1]);
            const close = a + (b - a) * (i % 3 + 1) / 4;
            const x = L + i * c.step;
            p += `M${x}.5 ${px(hi)}V${px(lo) + 1}M${x - 1} ${px(prev)}.5H${x}M${x + 1} ${px(close)}.5H${x + 2}`;
            prev = close;
        });
        s += `<path d="${p}" stroke="#00ff00" fill="none"/>`;
    } else {
        const w = c.step === 8 ? 4 : 2;
        for (const row of c.candles.split(',')) {
            const [i, hi, top, bot, lo, dir] = row.split(' ');
            const x = L + i * c.step, t = px(top), h = Math.max(1, px(bot) - t);
            s += `<path d="M${x}.5 ${px(hi)}V${px(lo)}" stroke="#00ff00"/><rect x="${x - w / 2}.5" y="${t}.5" width="${w}" height="${h}" fill="${dir === 'd' ? '#fff' : '#000'}" stroke="#00ff00"/>`;
        }
    }
    s += `<rect x="${L}.5" y="${T}.5" width="${R - L}" height="${B - T}" fill="none" stroke="#fff"/>`;
    for (const [y, label] of c.grid) s += `<path d="M${R} ${y}.5h4" stroke="#fff"/><text x="${R + 6}" y="${y + 4}" fill="#fff">${label}</text>`;
    c.times.forEach((t, i) => { s += `<path d="M${L + i * 64}.5 ${B}v4" stroke="#fff"/><text x="${L + i * 64}" y="${B + 13}" fill="#fff">${t}</text>`; });
    s += `<rect x="${R + 3}" y="${c.now[0] - 5}" width="39" height="11" fill="#778899"/><text x="${R + 6}" y="${c.now[0] + 4}" fill="#000">${c.now[1]}</text>`;
    return `<svg class="block h-full w-[685px] text-[9px]" shape-rendering="crispEdges">${s}</svg>`;
}

const price = (p, c, side) => `
    <button aria-label="${side} ${p.join('')}" class="flex h-[41px] flex-1 items-baseline justify-end pr-[15px] ${c.red ? 'bg-linear-to-b from-[#e03636] to-[#aa0000]' : 'bg-linear-to-b from-[#3434e4] to-[#0000a8]'}">
        <span class="text-[12px] font-bold leading-[41px]">${p[0]}</span><span class="ml-[3px] text-[30px] leading-[41px]">${p[1]}</span><span class="ml-[5px] self-start pt-[5px] text-[12px] font-bold">${p[2]}</span>
    </button>`;

document.getElementById('desk').innerHTML = charts.map(c => `
    <section class="absolute border border-[#696969] px-[5px] pb-1 ${c.active ? 'z-10 bg-white text-black' : 'bg-[#f0f0f0] text-[#777]'}" style="left:${c.x}px;top:${c.y}px">
        <header class="flex h-7 items-center pl-[3px] pr-3">
            <svg class="mr-1 size-4"><use href="#i-chart"/></svg><h3 class="flex-1">${c.name}</h3>
            <div class="flex items-center gap-[26px] ${c.active ? 'text-black' : 'text-[#999]'}">
                <button aria-label="最小化"><svg class="size-[10px]" viewBox="0 0 10 10"><path d="M1 9h8" stroke="currentColor" stroke-width="2"/></svg></button>
                <button aria-label="最大化"><svg class="size-[10px]" viewBox="0 0 10 10"><path d="M.5 1v8.500h9V1M0 1h10" fill="none" stroke="currentColor" stroke-width="1.300"/></svg></button>
                <button aria-label="关闭"><svg class="size-[10px]" viewBox="0 0 8 8"><use href="#i-close"/></svg></button>
            </div>
        </header>
        <div class="relative border-2 border-b-[#e8e8e8] border-l-[#888] border-r-[#e8e8e8] border-t-[#888] bg-black">
            <div style="height:${c.h}px">${plot(c)}</div>
            <div class="absolute left-[6px] top-[6px] w-[219px] text-white">
                <div class="flex h-[13px] items-center gap-[3px] text-[10px] leading-[13px]"><svg class="h-[13px] w-[14px]"><use href="#i-grid"/></svg><svg class="h-[13px] w-[14px]"><use href="#i-trade"/></svg><span class="ml-[3px]">${c.name}</span></div>
                <div class="mt-1 bg-black outline-2 outline-black">
                    <div class="flex h-6 justify-between">
                        <button class="h-6 w-[51px] ${c.red ? 'bg-linear-to-b from-[#ff5050] to-[#e03636]' : 'bg-linear-to-b from-[#4c4cff] to-[#3434e4]'}"><span class="mx-1 block border-b border-white/50 pb-[3px] pt-[3px] text-[12px] text-white/90">SELL</span></button>
                        <div class="flex h-[21px] w-[111px] border border-[#ababab] bg-white">
                            <button aria-label="减少手数" class="flex w-[21px] items-center justify-center border-r border-[#ababab] bg-[#f0f0f0]"><svg class="h-1 w-1.5" viewBox="0 0 6 4"><path d="M0 0h6L3 4z"/></svg></button>
                            <input aria-label="手数 ${c.name}" value="0.01" class="w-0 flex-1 pr-1 text-right text-[12px] text-black">
                            <button aria-label="增加手数" class="flex w-[21px] items-center justify-center border-l border-[#ababab] bg-[#f0f0f0]"><svg class="h-1 w-1.5" viewBox="0 0 6 4"><path d="M0 4h6L3 0z"/></svg></button>
                        </div>
                        <button class="h-6 w-[51px] ${c.red ? 'bg-linear-to-b from-[#ff5050] to-[#e03636]' : 'bg-linear-to-b from-[#4c4cff] to-[#3434e4]'}"><span class="mx-1 block border-b border-white/50 pb-[3px] pt-[3px] text-[12px] text-white/90">BUY</span></button>
                    </div>
                    <div class="flex gap-[2px]">${price(c.sell, c, 'SELL')}${price(c.buy, c, 'BUY')}</div>
                </div>
            </div>
        </div>
    </section>`).join('');
</script>
</body>
</html>
